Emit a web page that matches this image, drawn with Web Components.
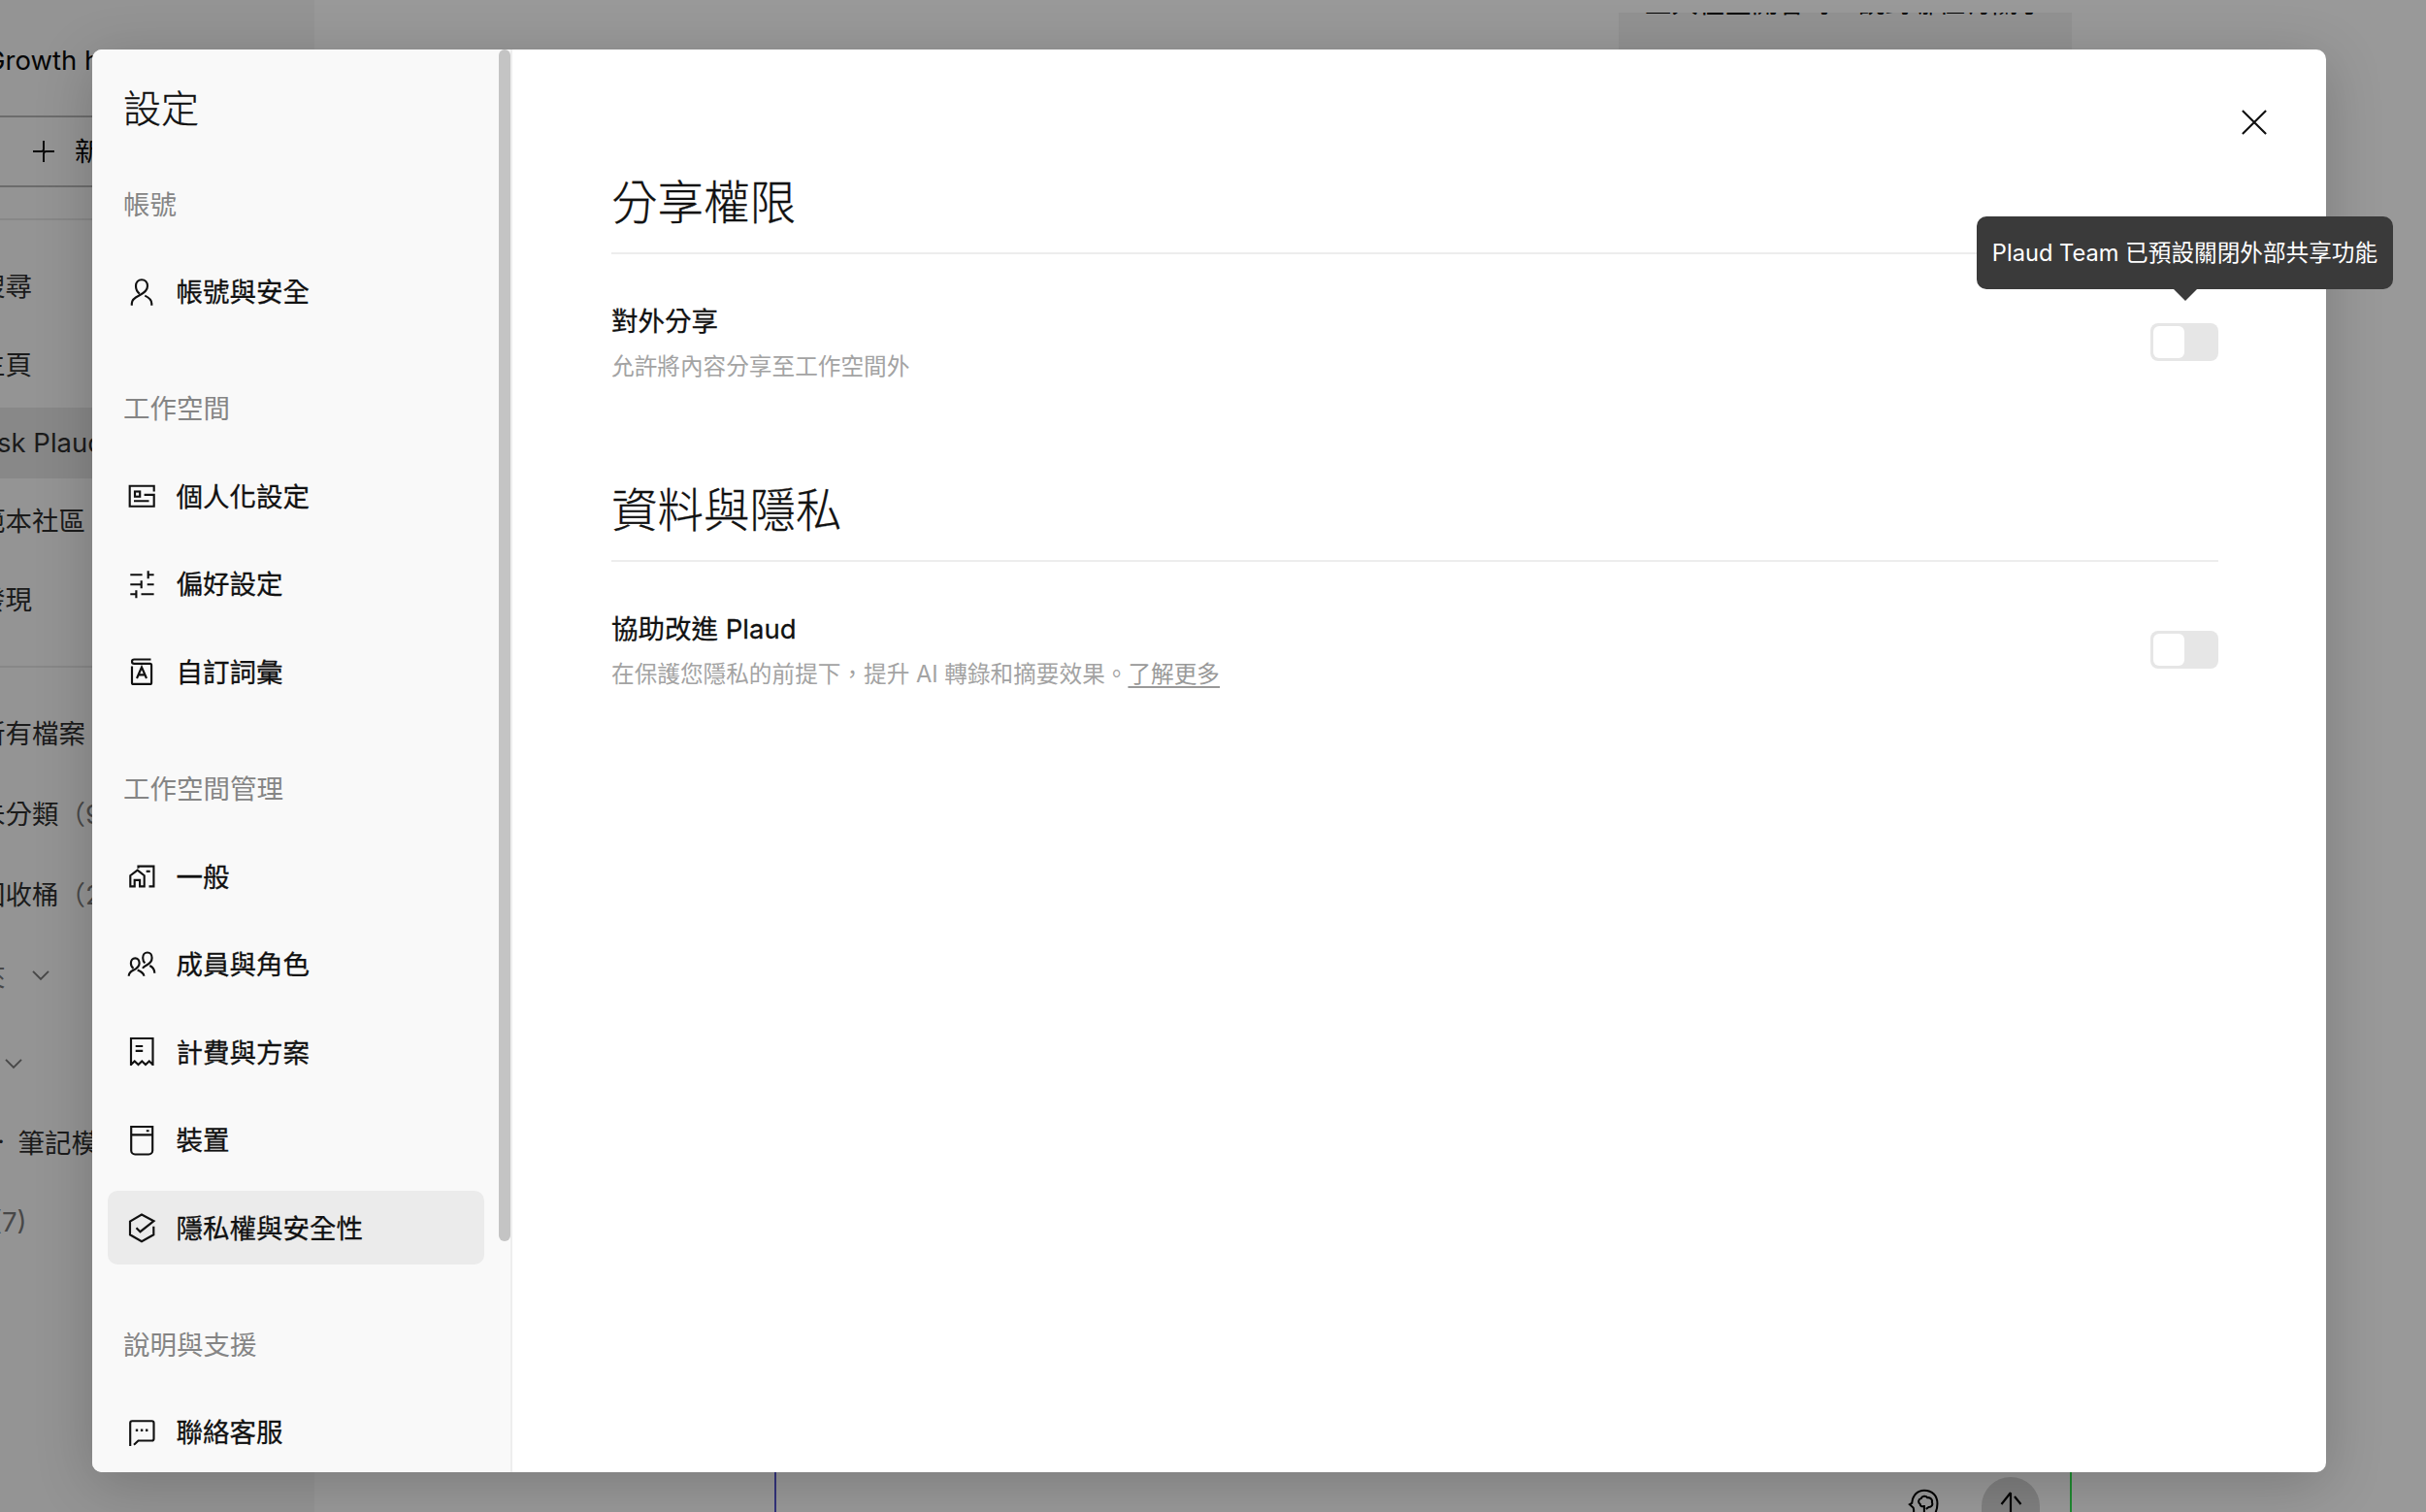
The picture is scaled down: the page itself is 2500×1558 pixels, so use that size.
<!DOCTYPE html>
<html lang="zh-Hant">
<head>
<meta charset="utf-8">
<title>設定</title>
<style>
html,body{margin:0;height:100%;overflow:hidden}
body{font-family:Inter,"Noto Sans CJK TC",sans-serif;font-size:27.5px;color:#111;background:#999}
</style>
</head>
<body>
<app-root></app-root>
<script>
const define=(name,css,html)=>customElements.define(name,class extends HTMLElement{
  connectedCallback(){
    if(this.shadowRoot)return;
    const root=this.attachShadow({mode:'open'});
    root.innerHTML=`<style>*{box-sizing:border-box}${css}</style>${typeof html==='function'?html(this):html}`;
  }
});

const ICONS={
  user:'<path d="M5.8 29.7v-2c0-3.6 3.4-6.4 7.6-8.3C18.500 17 22 14.500 22 9.800 22 5.800 19.400 3.200 16 3.200s-6 2.600-6 6.600c0 3.600 1.600 6.200 3.800 7.800M19.300 19.600c4 1.900 7 4.500 7 8.100v2"/>',
  card:'<path d="M28.700 11.500V5.700H3.700v21h25V14.900H18.600M8 21.200h15.500"/><rect x="9" y="11.500" width="5.200" height="5.200"/>',
  sliders:'<path d="M4.300 6.200h12.300M22.700 2.200v8M22.700 6.200h5.900M4.300 16.200h11.400M15.700 12.200v8M21.700 16.200h6.900M4.300 26.200h6.100M10.400 22.200v8M15.500 26.200h13.100"/>',
  book:'<path d="M25.500 3.500H8.300C6.700 3.500 6 4.500 6 5.700s.7 2.200 2.300 2.200h16.300a1.500 1.500 0 0 1 1.500 1.500v18a1.500 1.500 0 0 1-1.500 1.500H7.500A1.500 1.500 0 0 1 6 27.400V10.500M11 23l5-11.500L21 23M12.700 19.300h6.600"/>',
  home:'<path d="M4.300 26.400V15.200l7.400-5.500 7 5.500v11.200h-4.600v-6.600H8.700v6.600zM12.500 7.800V5.600h15.900v20.800h-4.900M20.700 10.800h4"/>',
  members:'<path d="M2.700 27.700c.1-3 1.900-4.700 4.600-6 3.500-1.700 6.300-3.600 6.300-7.300 0-3-1.800-5-4.300-5s-4.400 2-4.400 5c0 2.500 1.100 4.300 2.600 5.400M11.700 21.600c3.700 1.700 6.500 3 6.700 6.100M17 19.800c.6-1.200 1.900-2.200 3.700-3.100 3.300-1.600 5.900-3.900 5.900-7.700 0-3.300-2-5.500-4.700-5.500s-4.700 2.200-4.700 5.500c0 2.500.9 4.300 2.200 5.400M24.300 17c3.100 1.600 5 3.500 5 7.700"/>',
  receipt:'<path d="M5 30V2h22.500v28M5 29l3.700-3.500 3.800 3.500 3.800-3.500 3.700 3.500 3.800-3.500 3.700 3.500M9.700 10h7.500M9.700 14.800h7.500"/>',
  device:'<path d="M5.200 2h22v24.500a4 4 0 0 1-4 4h-14a4 4 0 0 1-4-4zM5.200 10.400h22M20.800 6.200h2.800"/>',
  shield:'<path d="M10.500 16.200l4 4L28.500 9.200 16 2.600 4 9.500v13.800L16 30.200l12.300-6.900v-8.500"/>',
  chat:'<path d="M4.200 30V6.200a2 2 0 0 1 2-2h20.300a2 2 0 0 1 2 2v16.300a2 2 0 0 1-2 2H12.500L8 28.700"/><path stroke-width="2.600" d="M9.800 13.700h2.400M14.900 13.700h2.400M20 13.700h2.400"/>',
  close:'<path d="M3.900 4l24.200 24M28.100 4L3.900 28"/>',
  chevron:'<path d="M8 11.800l8 8.200 8-8.200"/>',
  plus:'<path d="M5 16h8.500c1.500 0 2.500-1 2.500-2.500V5M27 16h-8.500c-1.500 0-2.500 1-2.500 2.500V27"/>',
  head:'<path d="M4.500 34c2-3 2.500-7 1.500-10L2 20.500l2.500-1.500C5.500 10 11 5 18 5c9 0 14.500 6 14.500 14.500 0 6-1.500 10-4.500 14.500M18 29v-6.500c-3 .5-4.500-.5-4.500-2.500-2.500-1.500-2-5.500 1-6 1-3 5.500-3.500 7-1 3.500-.5 6 2.500 5 5 1.500 3-.5 5.500-3.500 5.500l-3 2"/>',
  arrow:'<path d="M16 2v34M16 2L6.500 14M20 6l6.500 8"/>'
};
define('ui-icon',`:host{display:block;flex:none;width:32px;height:32px}svg{display:block;width:100%;height:100%;fill:none;stroke:currentColor;stroke-width:var(--stroke,2.15);overflow:visible}`,
  el=>`<svg viewBox="0 0 32 32">${ICONS[el.getAttribute('name')]}</svg>`);

/* ---------- workspace behind the dialog ---------- */
define('bg-row',`:host{display:flex;align-items:center;height:80.700px;margin-left:-22px;width:346px;white-space:nowrap;color:#1b1b1b}
 :host([dim]){color:#484848}:host([active]) .in{background:#888;padding-bottom:2px}
 .in{display:flex;align-items:center;height:73px;width:100%;padding-bottom:5px}::slotted(span){color:#484848}::slotted(ui-icon){margin:3px 0 0 20px}`,
  `<div class="in"><slot></slot></div>`);
define('bg-sidebar',`:host{display:flex;flex-direction:column;width:324px;flex:none;background:#949494;overflow:hidden;--stroke:1.9}
 .name{margin-left:-15px;height:119px;display:flex;align-items:center;padding-top:5px;color:#050505;white-space:nowrap}
 .new{display:flex;align-items:center;height:74px;border:solid #6c6c6c;border-width:2px 0;padding-left:29px;gap:16px;color:#050505;white-space:nowrap}
 .new span{padding-bottom:4px}
 .rule{height:2px;background:#878787;flex:none}.r1{margin:32px 0 28px}.r2{margin:28px 0 26.500px}
 .r2~bg-row{height:82.900px}`,
 `<div class="name">Growth hacking</div>
  <div class="new"><ui-icon name="plus"></ui-icon><span>新增音訊</span></div>
  <div class="rule r1"></div>
  <bg-row>搜尋</bg-row><bg-row>主頁</bg-row><bg-row active>Ask Plaud</bg-row><bg-row>範本社區</bg-row><bg-row>發現</bg-row>
  <div class="rule r2"></div>
  <bg-row>所有檔案</bg-row><bg-row>未分類<span>（9）</span></bg-row><bg-row>回收桶<span>（2）</span></bg-row>
  <bg-row dim style="margin-left:-77px;height:85px">資料夾<ui-icon name="chevron"></ui-icon></bg-row>
  <bg-row dim style="margin-left:-77px;height:96px">團隊<ui-icon name="chevron"></ui-icon></bg-row>
  <bg-row style="margin-left:-3px;height:68px">·<b style="width:13.500px"></b>筆記模板</bg-row>
  <bg-row dim style="margin-left:-8px;height:98px">(7)</bg-row>`);
define('bg-main',`:host{flex:1;display:flex;flex-direction:column;justify-content:space-between;background:#999;overflow:hidden}
 .bubble{margin:13px 0 0 1344px;width:467px;height:60px;padding-left:27px;background:#929292;overflow:hidden;color:#000;white-space:nowrap}
 .bubble div{margin-top:-33px;line-height:47px}
 .composer{margin-left:474px;width:1337px;height:150px;display:flex;align-items:flex-end;justify-content:flex-end;gap:42px;padding:0 31px 0 0;border:solid;border-width:0 2px;border-color:transparent #1f8a30 transparent #33337c}
 .send{width:60px;height:36px;display:flex;justify-content:center;padding-top:14px;border-radius:30px 30px 0 0;background:#808080;color:#000}
 .head{width:34px;height:27px;color:#000}`,
 `<div class="bubble"><div>並大在空開會時，說對哪住有關了</div></div>
  <div class="composer"><div class="head"><ui-icon name="head" style="width:30px;height:30px"></ui-icon></div>
  <div class="send"><ui-icon name="arrow"></ui-icon></div></div>`);

/* ---------- settings dialog ---------- */
define('nav-item',`:host{display:flex;align-items:center;gap:19px;width:388px;height:75.500px;margin-bottom:15px;padding-left:19.500px;border-radius:10px;color:#111;-webkit-text-stroke:.3px #111}
 :host([active]){background:#ebebeb}span{padding:0 0 3px .5px}`,
 el=>`<ui-icon name="${el.getAttribute('icon')}"></ui-icon><span><slot></slot></span>`);
define('nav-group',`:host{display:block;margin-bottom:44.700px}.t{height:75.500px;margin-bottom:15px;padding:0 0 3px 16.500px;display:flex;align-items:center;color:#858585}`,
 el=>`<div class="t">${el.getAttribute('label')}</div><slot></slot>`);
define('settings-nav',`:host{display:flex;width:433px;flex:none;background:#f9f9f9;border-right:2px solid #eee;overflow:hidden}
 .list{flex:1;padding-left:15.500px;overflow:hidden;height:100%}
 h1{margin:0;padding-left:16.500px;height:121.500px;line-height:122px;font-size:39px;font-weight:300;color:#111;-webkit-text-stroke:.3px #111}
 .bar{width:12px;height:1228px;border-radius:6px;background:#c4c4c4;flex:none}`,
 `<div class="list"><h1>設定</h1>
  <nav-group label="帳號"><nav-item icon="user">帳號與安全</nav-item></nav-group>
  <nav-group label="工作空間"><nav-item icon="card">個人化設定</nav-item><nav-item icon="sliders">偏好設定</nav-item><nav-item icon="book">自訂詞彙</nav-item></nav-group>
  <nav-group label="工作空間管理"><nav-item icon="home">一般</nav-item><nav-item icon="members">成員與角色</nav-item><nav-item icon="receipt">計費與方案</nav-item><nav-item icon="device">裝置</nav-item><nav-item icon="shield" active>隱私權與安全性</nav-item></nav-group>
  <nav-group label="說明與支援"><nav-item icon="chat">聯絡客服</nav-item></nav-group></div>
  <div class="bar"></div>`);
define('ui-toggle',`:host{display:block;position:relative;flex:none;width:70px;height:39px;margin-bottom:2px;padding:3px;border-radius:8px;background:#e6e6e6}
 .k{width:32px;height:33px;border-radius:6px;background:#fff}`,`<div class="k"></div><slot></slot>`);
define('ui-tooltip',`:host{position:absolute;right:-180px;bottom:74px;z-index:3;display:flex;align-items:center;justify-content:center;width:429px;height:75px;padding-bottom:3px;border-radius:10px;background:#3a3a3a;color:#fff;font-size:23.650px;white-space:nowrap}
 :host::after{content:"";position:absolute;left:202px;top:74px;border:solid transparent;border-width:13px 13px 0;border-top-color:#3a3a3a}`,`<slot></slot>`);
define('setting-section',`:host{display:block;height:317px}
 h2{margin:0;height:106px;line-height:105px;font-size:47.500px;font-weight:300;color:#111;border-bottom:2px solid #ededed;-webkit-text-stroke:.3px #111}
 .row{display:flex;justify-content:space-between;align-items:center;height:182px}
 .text{padding-top:2px}.l{line-height:40px;color:#111;-webkit-text-stroke:.3px #111}.d{margin-top:8px;line-height:38px;font-size:23.650px;color:#a3a3a3}`,
 el=>`<h2>${el.getAttribute('heading')}</h2><div class="row"><div class="text"><div class="l">${el.getAttribute('label')}</div><div class="d"><slot></slot></div></div><slot name="control"></slot></div>`);
define('settings-dialog',`:host{display:flex;width:2302px;height:1466px;border-radius:10px;background:#fff;box-shadow:0 12px 60px rgba(0,0,0,.2)}
 settings-nav{border-radius:10px 0 0 10px}
 main{flex:1;display:flex;flex-direction:column;padding:0 111px 0 102px}
 .close{align-self:flex-end;margin:59px -53px 14px 0;color:#111}
 a{text-decoration:underline;text-underline-offset:4px;text-decoration-thickness:2px;color:#999}`,
 `<settings-nav></settings-nav><main><ui-icon class="close" name="close"></ui-icon>
  <setting-section heading="分享權限" label="對外分享">允許將內容分享至工作空間外<ui-toggle slot="control"><ui-tooltip>Plaud Team 已預設關閉外部共享功能</ui-tooltip></ui-toggle></setting-section>
  <setting-section heading="資料與隱私" label="協助改進 Plaud">在保護您隱私的前提下，提升 AI 轉錄和摘要效果。<a>了解更多</a><ui-toggle slot="control"></ui-toggle></setting-section></main>`);
define('app-root',`:host{display:flex;position:relative;width:2500px;height:1558px;overflow:hidden}
 .overlay{position:absolute;inset:0;padding:51px 0 0 95px}`,
 `<bg-sidebar></bg-sidebar><bg-main></bg-main><div class="overlay"><settings-dialog></settings-dialog></div>`);
</script>
</body>
</html>
